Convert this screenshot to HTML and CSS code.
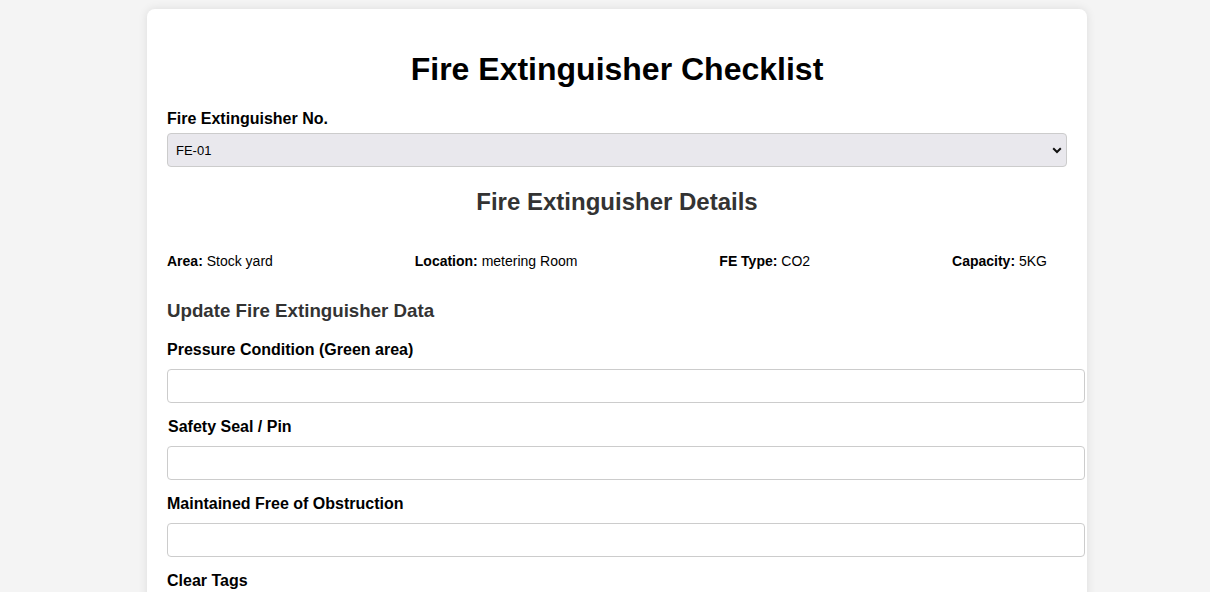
FILE: index.html
```html
<!DOCTYPE html>
<html lang="en">
<head>
<meta charset="utf-8">
<title>Fire Extinguisher Checklist</title>
<link rel="stylesheet" href="styles.css">
</head>
<body>
<div class="page">
  <div class="card">
    <h1 class="title">Fire Extinguisher Checklist</h1>
    <label class="select-label" for="fe-no">Fire Extinguisher No.</label>
    <div class="select-wrap">
      <select id="fe-no" class="fe-select">
        <option>FE-01</option>
        <option>FE-02</option>
      </select>
      <svg class="chevron" width="10" height="7" viewBox="0 0 10 7" aria-hidden="true"><path d="M1.2 1.3 L5 5 L8.8 1.3" fill="none" stroke="#111" stroke-width="2"/></svg>
    </div>
    <h2 class="details-title">Fire Extinguisher Details</h2>
    <div class="details">
      <div><strong>Area:</strong> Stock yard</div>
      <div><strong>Location:</strong> metering Room</div>
      <div><strong>FE Type:</strong> CO2</div>
      <div><strong>Capacity:</strong> 5KG</div>
    </div>
    <h3 class="update-title">Update Fire Extinguisher Data</h3>
    <label class="field-label">Pressure Condition (Green area)</label>
    <input class="field-input" type="text">
    <label class="field-label shift">Safety Seal / Pin</label>
    <input class="field-input" type="text">
    <label class="field-label">Maintained Free of Obstruction</label>
    <input class="field-input" type="text">
    <label class="field-label">Clear Tags</label>
    <input class="field-input" type="text">
  </div>
</div>
</body>
</html>
```
FILE: styles.css
```css
html, body {
  margin: 0;
  padding: 0;
}
body {
  background: #f4f4f4;
  font-family: "Liberation Sans", Arial, sans-serif;
  color: #000;
}
.page {
  padding: 9px 123px 20px 147px;
}
.card {
  width: 940px;
  box-sizing: border-box;
  padding: 20px;
  background: #fff;
  border-radius: 8px;
  box-shadow: 0 0 10px rgba(0, 0, 0, 0.1);
}
.title {
  font-size: 32px;
  text-align: center;
  margin: 22px 0 22px;
  line-height: 37px;
}
.select-label {
  display: block;
  font-weight: bold;
  font-size: 16px;
  line-height: 18px;
  margin-bottom: 5px;
}
.select-wrap {
  position: relative;
}
.fe-select {
  display: block;
  width: 100%;
  height: 34px;
  padding: 0 8px;
  font-family: "Liberation Sans", Arial, sans-serif;
  font-size: 13px;
  color: #000;
  background-color: #e9e8ed;
  border: 1px solid #ccc;
  border-radius: 4px;
  appearance: none;
  -webkit-appearance: none;
}
.chevron {
  position: absolute;
  right: 5px;
  top: 14px;
  pointer-events: none;
}
.details-title {
  font-size: 24px;
  line-height: 28px;
  text-align: center;
  color: #333;
  margin: 21px 0 37px;
}
.details {
  display: flex;
  justify-content: space-between;
  padding-right: 20px;
  font-size: 14px;
  line-height: 16px;
}
.update-title {
  font-size: 18.72px;
  line-height: 22px;
  color: #333;
  margin: 31px 0 19px;
}
.field-label {
  display: block;
  font-weight: bold;
  font-size: 16px;
  line-height: 18px;
  margin-bottom: 10px;
}
.field-label.shift {
  padding-left: 1px;
}
.field-input {
  display: block;
  width: 100%;
  padding: 8px;
  box-sizing: content-box;
  height: 16px;
  border: 1px solid #ccc;
  border-radius: 4px;
  margin: 0 0 15px;
  font-size: 14px;
}
```
